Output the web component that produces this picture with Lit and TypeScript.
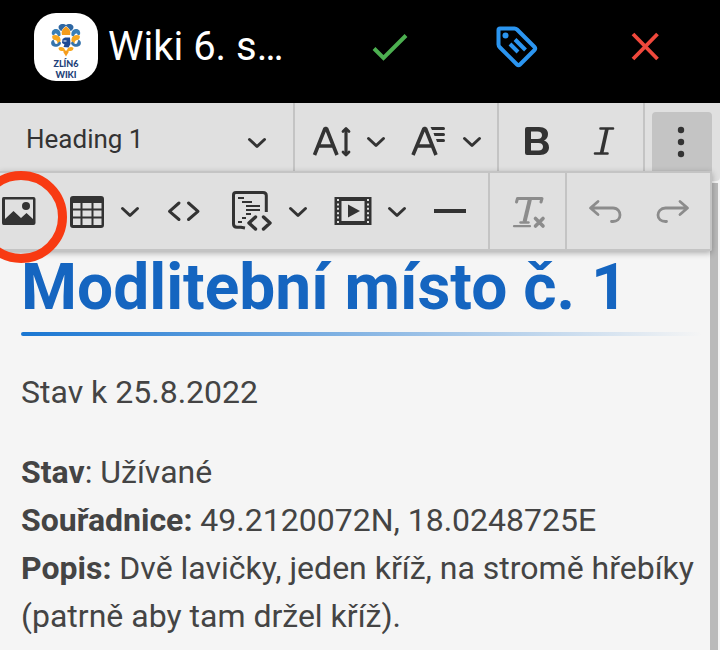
import { LitElement, html, css, svg } from "lit";
import { customElement } from "lit/decorators.js";

const icon = (body: unknown, w = 40) =>
  html`<svg width=${w} height="40" viewBox="0 0 ${w} 40" aria-hidden="true">${body}</svg>`;

const chevron = html`<svg class="chev" width="20" height="20" viewBox="0 0 20 20" aria-hidden="true">
  <path d="M2.500 7.500 L10 14.500 L17.500 7.500" fill="none" stroke="currentColor" stroke-width="3" stroke-linecap="round" stroke-linejoin="round" />
</svg>`;

const fontSize = svg`<g fill="none" stroke="currentColor" stroke-width="3.600">
  <path d="M2.500 34 L13 7.500 H14.500 L25 34 M6 25 H22" stroke-linejoin="bevel"/>
  <path d="M34 8 V34" stroke-width="3.200"/><path d="M31 10.500 L34 7.500 L37 10.500 M31 31 L34 34 L37 31" stroke-width="2.800" stroke-linecap="round" stroke-linejoin="round"/></g>`;
const fontFamily = svg`<g fill="none" stroke="currentColor" stroke-width="3.600">
  <path d="M5 34 L16 7.500 H17.500 L28 34 M9 25 H25" stroke-linejoin="bevel"/></g>
  <path d="M22.500 6 H35.500 Q37 6 37 7.500 T35.500 9 H24 Z M25.500 12 H35.500 Q37 12 37 13.500 T35.500 15 H26.500 Z M28 18 H35.500 Q37 18 37 19.500 T35.500 21 H29 Z" fill="currentColor"/>`;
const bold = svg`<path d="M10 6 H22 C28 6 31 9 31 13 C31 16 29.500 18.500 27 19.500 C30 20.500 32 23 32 26.500 C32 31 28.500 34 23 34 H10 Q8 34 8 32 V8 Q8 6 10 6 Z M14 10.500 V18 H20.500 C23.500 18 25 16.500 25 14.200 C25 12 23.500 10.500 20.500 10.500 Z M14 22 V29.500 H21.500 C24.500 29.500 26 28 26 25.800 C26 23.400 24.500 22 21.500 22 Z" fill="currentColor" fill-rule="evenodd"/>`;
const italic = svg`<path d="M16.500 7.500 H29 M11 32.500 H23.500" fill="none" stroke="currentColor" stroke-width="2.600" stroke-linecap="round"/><path d="M23 7.500 L17.500 32.500" fill="none" stroke="currentColor" stroke-width="3.600"/>`;
const dots = svg`<g fill="currentColor"><circle cx="19" cy="8" r="3.200"/><circle cx="19" cy="20" r="3.200"/><circle cx="19" cy="32" r="3.200"/></g>`;

const image = svg`<path d="M2.500 6 H32.500 Q34.500 6 34.500 8 V32 Q34.500 34 32.500 34 H2.500 Q1 34 1 32 V8 Q1 6 2.500 6 Z M4 8.500 V28 L12.500 20 L20 27 L25.500 22 L32 28 V8.500 Z" fill="currentColor" fill-rule="evenodd"/><circle cx="25" cy="15" r="4" fill="currentColor"/>`;
const table = svg`<path d="M7 5 H35 Q38 5 38 8 V34 Q38 37 35 37 H7 Q4 37 4 34 V8 Q4 5 7 5 Z M7 12 V17.500 H14.500 V12 Z M16.500 12 V17.500 H25.500 V12 Z M27.500 12 V17.500 H35.500 V12 Z M7 19.500 V25.500 H14.500 V19.500 Z M16.500 19.500 V25.500 H25.500 V19.500 Z M27.500 19.500 V25.500 H35.500 V19.500 Z M7 27.500 V34 H14.500 V27.500 Z M16.500 27.500 V34 H25.500 V27.500 Z M27.500 27.500 V34 H35.500 V27.500 Z" fill="currentColor" fill-rule="evenodd"/>`;
const source = svg`<path d="M14 12 L4.500 20.300 L14 28.500 M23.500 12 L33 20.300 L23.500 28.500" fill="none" stroke="currentColor" stroke-width="3" stroke-linecap="round" stroke-linejoin="round"/>`;
const template = svg`<g fill="none" stroke="currentColor">
  <path d="M15 37 L11 36.200 H7 Q3.500 36.200 3.500 33 V4 Q3.500 1.500 6 1.500 H33 Q36.300 1.500 36.300 4.500 V21" stroke-width="3"/>
  <path d="M8 7 H14 M12 11 H22 M16 15 H30 M16 19 H30 M16 23 H21 M12 27 H16 M8 31 H12" stroke-width="2"/>
  <path d="M25.500 26 L19 32 L25.500 38 M33.500 26 L40 32 L33.500 38" stroke-width="3.400" stroke-linecap="round" stroke-linejoin="round"/></g>`;
const media = svg`<path d="M1.500 6 H38.500 V34 H1.500 Z M8.500 10 V30 H31.500 V10 Z" fill="currentColor" fill-rule="evenodd"/>
  <path d="M5 8 V32 M35 8 V32" stroke="#e0e0e0" stroke-width="2" stroke-dasharray="2 2.400"/>
  <path d="M15 13.500 L27 20 L15 26.500 Z" fill="currentColor"/>`;
const rule = svg`<rect x="2" y="18" width="32" height="4" fill="currentColor"/>`;
const clear = svg`<g fill="none" stroke="currentColor">
  <path d="M7.500 11 L8.500 7.500 H33 L32 11" stroke-width="3" stroke-linejoin="round" stroke-linecap="round"/>
  <path d="M21 8 L15.500 31" stroke-width="4"/><path d="M11.500 31.500 H19.500" stroke-width="2.400" stroke-linecap="round"/>
  <path d="M5 35.200 H21" stroke-width="2.200" stroke-linecap="round"/>
  <path d="M26.500 27.500 L34 35 M34 27.500 L26.500 35" stroke-width="3.600" stroke-linecap="round"/></g>`;
const undo = svg`<path d="M13 10.500 L5.500 17 L13 23.500 M6 17 H28 C33 17 35 21 35 24 C35 28 32 30.500 28 30.500 H26.500" fill="none" stroke="currentColor" stroke-width="2.800" stroke-linecap="round" stroke-linejoin="round"/>`;
const redo = svg`<path d="M27 10.500 L34.500 17 L27 23.500 M34 17 H12.500 C7.500 17 5 21 5 24 C5 28 8 30.500 12.500 30.500 H13.500" fill="none" stroke="currentColor" stroke-width="2.800" stroke-linecap="round" stroke-linejoin="round"/>`;

const emblemHalf = svg`
  <path d="M15 1 C12 -1 8 0 7.500 3 C7.500 5 9 6.500 10.500 7 C11.500 5 13 3 15 2 Z" fill="#2e67a3"/>
  <path d="M1 10.500 C0 7 2.500 4.500 5.500 5 C8.500 5.500 10 8 9.500 11.500 L7 13 C7 10.500 5.500 9 4 9.500 L3 11.500 Z" fill="#3a7fb6"/>
  <path d="M1.500 11.500 C4.500 10 9 11.500 9.500 15 C10 18 8.500 20 6.500 19.500 C6.500 17.500 5.500 16 3.500 16 C1.500 15.500 0.500 13 1.500 11.500 Z" fill="#f8a81f"/>
  <path d="M2.500 15.500 C-1 17 -0.500 21.500 3 22.500 C6.500 23.500 10 21.500 10 18.500 L8 17.500 C7.500 19.500 5.500 20.500 4 19.500 Z" fill="#3674ac"/>
  <path d="M7.500 24 C8.500 22.500 11 22.500 13 24 L14.500 27 H11 C9.500 27.500 7.500 26 7.500 24 Z" fill="#f8a81f"/>`;
const emblem = svg`<svg width="30" height="34" viewBox="0 0 30 34" aria-hidden="true">
  ${emblemHalf}<g transform="matrix(-1 0 0 1 30 0)">${emblemHalf}</g>
  <path d="M15 2.500 C11 5 10 8 11 11 H19 C20 8 19 5 15 2.500 Z" fill="#f59c1c"/>
  <path d="M11.500 15 L14 13.500 L19 13.500 L19.500 20 L17.500 23.500 L12.500 23 L13.500 20.500 L11 19 Z" fill="#1f4a94"/>
  <path d="M12.500 17 H15.500" stroke="#fff"/>
  <path d="M12 27.500 L15 26.500 L18 27.500 L15 32.500 Z" fill="#f59c1c"/>
</svg>`;

@customElement("app-root")
export class AppRoot extends LitElement {
  static styles = css`
    :host { display: flex; flex-direction: column; min-height: 100vh; overflow: hidden; background: #f5f5f5; color: #444; font-family: Roboto, "Noto Sans", sans-serif; }
    * { box-sizing: border-box; }
    svg { display: block; flex: none; }
    button { appearance: none; border: 0; padding: 0; margin: 0; background: none; color: inherit; font: inherit; display: flex; align-items: center; flex: none; }
    header { display: flex; align-items: center; height: 103px; padding: 0 50px 9px 34px; background: #000; color: #fff; }
    .logo { display: flex; flex-direction: column; align-items: center; flex: none; width: 64px; height: 68px; padding-top: 11px; border-radius: 22px; background: #fff; color: #233f78; font: 900 9px/11px Lato, sans-serif; }
    .title { flex: 1; min-width: 0; margin: 0 0 0 10px; font-size: 40px; font-weight: 400; line-height: 48px; white-space: nowrap; }
    .actions { display: flex; gap: 80px; }
    .ok { color: #4caf50; } .tag { color: #2b95f0; } .close { color: #f0483c; }
    .toolbar { position: relative; flex: none; display: flex; height: 78px; background: #e0e0e0; border-radius: 0 0 4px 0; color: #333; }
    .group { display: flex; align-items: center; height: 76px; border-right: 2px solid #c4c4c4; flex: none; }
    .split { gap: 14px; }
    .heading { display: grid; flex: 1; align-items: center; border-right: 2px solid #c4c4c4; }
    .heading select { grid-area: 1 / 1; appearance: none; width: 100%; height: 72px; padding: 0 0 6px 26px; border: 0; background: none; color: inherit; font: 26px/32px Roboto, sans-serif; }
    .heading .chev { grid-area: 1 / 1; justify-self: end; margin-right: 26px; pointer-events: none; }
    .fonts { gap: 22px; padding: 0 15px 0 17px; }
    .marks { gap: 27px; padding: 0 19px 0 18px; }
    .more { width: 60px; height: 69px; margin: 9px 8px 0 7px; padding-bottom: 10px; justify-content: center; align-items: center; background: #c4c4c4; border-radius: 4px; }
    .panel { position: absolute; z-index: 1; top: 68px; left: 0; right: 8px; display: flex; height: 80px; background: #e0e0e0; border: 2px solid #c4c4c4; border-left: 0; border-radius: 0 0 2px 0; box-shadow: 0 2px 6px rgba(0, 0, 0, 0.3); }
    .insert { flex: 1; gap: 25px; padding-left: 1px; }
    .format { padding: 0 16px 0 19px; color: #8c8c8c; }
    .history { gap: 28px; padding: 0 17px 0 18px; border: 0; color: #8c8c8c; }
    .mark { position: absolute; z-index: 2; top: 68px; left: -25px; width: 92px; height: 92px; border: 9px solid #f83a12; border-radius: 50%; pointer-events: none; }
    .body { flex: 1; display: flex; padding-right: 2px; }
    main { flex: 1; min-width: 0; padding: 67px 8px 0 21px; }
    h1 { margin: 0; font-size: 64px; line-height: 80px; font-weight: 700; color: #1565c0; }
    .line { height: 4px; margin: 4px 0 32px; border-radius: 2px; background: linear-gradient(to right, #1976d2, rgba(25, 118, 210, 0)); }
    p { margin: 0 0 32px; font-size: 32px; line-height: 48px; }
    .thumb { flex: none; width: 8px; margin-top: 2px; background: #bababa; }
  `;

  private split(label: string, body: unknown, w = 40) {
    return html`<button class="split" aria-label=${label} aria-haspopup="true">${icon(body, w)}${chevron}</button>`;
  }

  render() {
    return html`
      <header>
        <div class="logo">${emblem}<span>ZLÍN6</span><span>WIKI</span></div>
        <h2 class="title">Wiki 6. s…</h2>
        <div class="actions">
          <button class="ok" aria-label="Save">
            <svg width="48" height="48" viewBox="0 0 48 48"><path d="M8 25.500 L17.500 35 L40 12.500" fill="none" stroke="currentColor" stroke-width="4"/></svg>
          </button>
          <button class="tag" aria-label="Tags">
            <svg width="48" height="48" viewBox="0 0 48 48"><path d="M6 5.500 H20.500 Q22 5.500 23 6.500 L40.500 24 Q42 25.500 40.500 27 L26 41.500 Q24.500 43 23 41.500 L6 24.500 Q4.500 23 4.500 21.500 V7 Q4.500 5.500 6 5.500 Z M16 21 L24 29 M21 16.500 L31.500 27" fill="none" stroke="currentColor" stroke-width="4"/><circle cx="11.500" cy="12.500" r="3" fill="currentColor"/></svg>
          </button>
          <button class="close" aria-label="Close">
            <svg width="48" height="48" viewBox="0 0 48 48"><path d="M11 11 L35.500 36 M35.500 11 L11 36" fill="none" stroke="currentColor" stroke-width="3.800"/></svg>
          </button>
        </div>
      </header>
      <div class="toolbar" role="toolbar">
        <label class="heading">
          <select aria-label="Heading"><option>Heading 1</option></select>
          ${chevron}
        </label>
        <div class="group fonts">${this.split("Font size", fontSize)}${this.split("Font family", fontFamily)}</div>
        <div class="group marks">
          <button aria-label="Bold">${icon(bold)}</button>
          <button aria-label="Italic">${icon(italic)}</button>
        </div>
        <button class="more" aria-label="Show more items" aria-expanded="true">${icon(dots)}</button>
        <div class="panel">
          <div class="group insert">
            <button aria-label="Insert image">${icon(image)}</button>
            ${this.split("Insert table", table)}
            <button aria-label="Source">${icon(source)}</button>
            ${this.split("Template", template, 44)}
            ${this.split("Insert media", media)}
            <button aria-label="Horizontal line">${icon(rule)}</button>
          </div>
          <div class="group format"><button disabled aria-label="Remove format">${icon(clear)}</button></div>
          <div class="group history">
            <button disabled aria-label="Undo">${icon(undo)}</button>
            <button disabled aria-label="Redo">${icon(redo)}</button>
          </div>
        </div>
        <div class="mark"></div>
      </div>
      <div class="body">
        <main>
          <h1>Modlitební místo č. 1</h1>
          <div class="line"></div>
          <p>Stav k 25.8.2022</p>
          <p>
            <b>Stav</b>: Užívané<br />
            <b>Souřadnice:</b> 49.2120072N, 18.0248725E<br />
            <b>Popis:</b> Dvě lavičky, jeden kříž, na stromě hřebíky <wbr />(patrně aby tam držel kříž).
          </p>
        </main>
        <div class="thumb"></div>
      </div>
    `;
  }
}
